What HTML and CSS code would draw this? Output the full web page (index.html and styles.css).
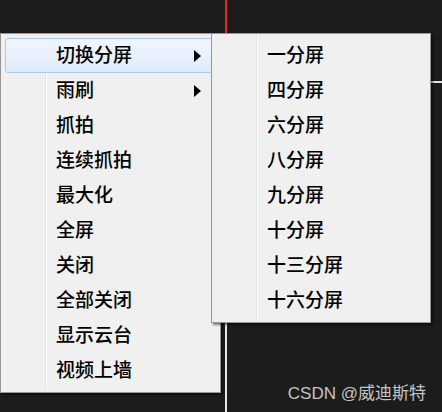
FILE: index.html
```html
<!DOCTYPE html>
<html lang="zh-CN">
<head>
    <meta charset="UTF-8">
    <title>视频窗口菜单</title>
    <link rel="stylesheet" href="styles.css">
</head>
<body>
    <div class="screen">
        <div class="split-v"></div>
        <div class="split-h"></div>

        <ul class="menu menu-main">
            <li class="item active has-sub">切换分屏</li>
            <li class="item has-sub">雨刷</li>
            <li class="item">抓拍</li>
            <li class="item">连续抓拍</li>
            <li class="item">最大化</li>
            <li class="item">全屏</li>
            <li class="item">关闭</li>
            <li class="item">全部关闭</li>
            <li class="item">显示云台</li>
            <li class="item">视频上墙</li>
        </ul>

        <ul class="menu menu-sub">
            <li class="item">一分屏</li>
            <li class="item">四分屏</li>
            <li class="item">六分屏</li>
            <li class="item">八分屏</li>
            <li class="item">九分屏</li>
            <li class="item">十分屏</li>
            <li class="item">十三分屏</li>
            <li class="item">十六分屏</li>
        </ul>

        <div class="watermark">CSDN @威迪斯特</div>
    </div>
</body>
</html>
```

FILE: styles.css
```css
body {
    margin: 0;
    background-color: #1c1c1c;
    font-family: "Noto Sans CJK SC", sans-serif;
}

.screen {
    position: relative;
    width: 442px;
    height: 412px;
    overflow: hidden;
}

/* video grid lines behind the menus */
.split-v {
    position: absolute;
    left: 225px;
    top: 0;
    bottom: 0;
    width: 2px;
    background: linear-gradient(#e8262b 0 33px, #e4e4e4 33px);
}

.split-h {
    position: absolute;
    left: 227px;
    right: 0;
    top: 81px;
    height: 2px;
    background-color: #e4e4e4;
}

.menu {
    position: absolute;
    top: 33px;
    margin: 0;
    padding: 4px;
    list-style: none;
    background-color: #f0f0f0;
    border: 1px solid #979797;
    box-shadow: 2px 2px 2px rgba(0, 0, 0, 0.5);
    box-sizing: border-box;
}

/* icon gutter line */
.menu::before {
    content: "";
    position: absolute;
    left: 44px;
    top: 2px;
    bottom: 2px;
    width: 1px;
    background-color: #e2e3e3;
    border-right: 1px solid #ffffff;
}

.menu-main {
    left: 0;
    width: 221px;
    height: 360px;
    z-index: 1;
}

.menu-sub {
    left: 211px;
    width: 220px;
    height: 290px;
    z-index: 2;
}

.item {
    position: relative;
    height: 35px;
    line-height: 30px;
    padding: 0 0 3px 50px;
    font-size: 19px;
    font-weight: 500;
    color: #000;
    border: 1px solid transparent;
    border-radius: 3px;
    box-sizing: border-box;
}

.item.active {
    background: linear-gradient(#f1f6fd, #e0ebfa);
    border-color: #a9c8f0;
}

.has-sub::after {
    content: "";
    position: absolute;
    right: 14px;
    top: 50%;
    margin-top: -6px;
    border-left: 7px solid #000;
    border-top: 6px solid transparent;
    border-bottom: 6px solid transparent;
}

.watermark {
    position: absolute;
    right: 16px;
    bottom: 8px;
    font-family: "Liberation Sans", "Noto Sans CJK SC", sans-serif;
    font-size: 17px;
    color: #c4c4c4;
}
```
